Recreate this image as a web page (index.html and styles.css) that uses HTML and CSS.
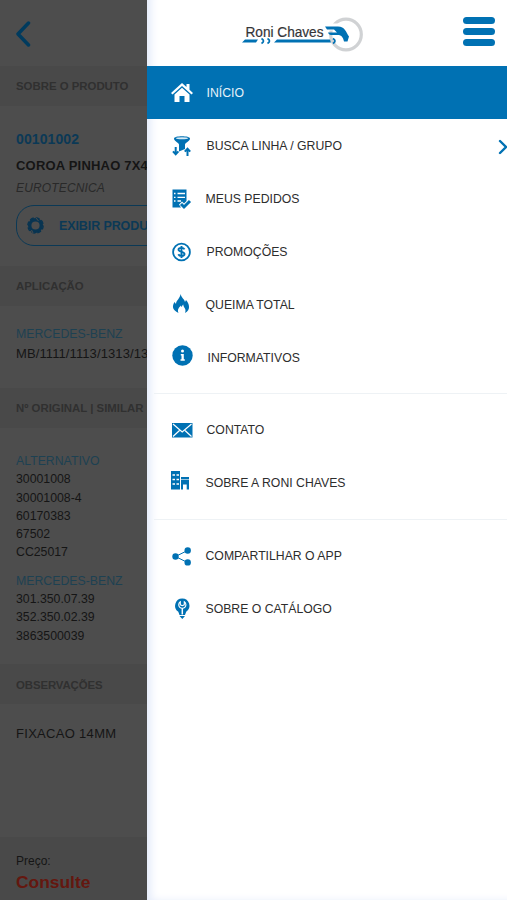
FILE: index.html
```
<!DOCTYPE html>
<html lang="pt-BR">
<head>
  <meta charset="UTF-8">
  <title>Roni Chaves</title>
  <link rel="stylesheet" href="styles.css">
</head>
<body>
  <!-- Produto (atrás do menu) -->
  <main class="produto">
    <div class="topo">
      <svg width="16" height="26" viewBox="0 0 16 26"><path d="M13.500 2 3 13l10.500 11" fill="none" stroke="#003b5e" stroke-width="3.500" stroke-linecap="round" stroke-linejoin="round"/></svg>
    </div>

    <h2 class="secao">SOBRE O PRODUTO</h2>
    <div class="bloco sobre">
      <div class="codigo">00101002</div>
      <div class="nome">COROA PINHAO 7X4</div>
      <div class="marca">EUROTECNICA</div>
      <div class="botao">
        <svg width="17" height="17" viewBox="0 0 17 17"><circle cx="8.5" cy="8.5" r="5.8" fill="none" stroke="#083451" stroke-width="3.400"/><circle cx="8.5" cy="8.5" r="7.700" fill="none" stroke="#083451" stroke-width="1.300" stroke-dasharray="4 2.050"/><path d="m9 1 2.500 3M6 16l-1.500-3" stroke="#4c4c4c" stroke-width="1"/></svg>
        <span>EXIBIR PRODU</span>
      </div>
    </div>

    <h2 class="secao">APLICAÇÃO</h2>
    <div class="bloco aplicacao">
      <div class="grupo">MERCEDES-BENZ</div>
      <div class="veiculo">MB/1111/1113/1313/13</div>
    </div>

    <h2 class="secao">Nº ORIGINAL | SIMILAR</h2>
    <div class="bloco numeros">
      <div class="grupo">ALTERNATIVO</div>
      <div>30001008</div>
      <div>30001008-4</div>
      <div>60170383</div>
      <div>67502</div>
      <div>CC25017</div>
      <div class="grupo outro">MERCEDES-BENZ</div>
      <div>301.350.07.39</div>
      <div>352.350.02.39</div>
      <div>3863500039</div>
    </div>

    <h2 class="secao obs">OBSERVAÇÕES</h2>
    <div class="bloco fixacao">FIXACAO 14MM</div>

    <div class="preco">
      <div>Preço:</div>
      <div class="valor">Consulte</div>
    </div>
  </main>

  <!-- Menu lateral -->
  <nav class="menu">
    <header class="menu-topo">
      <svg class="logo" width="122" height="38" viewBox="0 0 122 38">
        <circle cx="104" cy="18.500" r="15.300" fill="none" stroke="#d0d2d4" stroke-width="3.200"/>
        <path d="M83 11h14c6 0 8 6 9 14" fill="none" stroke="#fff" stroke-width="7"/>
        <text x="3.500" y="20.500" textLength="78" lengthAdjust="spacingAndGlyphs">Roni Chaves</text>
        <path d="M83 10.500h13c7 0 8 6 11 10l-1.500 5H102c-1-4.500-3-6.500-6-6.500h-7c-1.500 0-2.500-1-3-2.500h9l-3-3h-7z" fill="#0071b3"/>
        <path d="M3 23.500h13L14 26.500H0zM35 23.500h53l1 3H32z" fill="#0071b3"/>
        <path d="M19.500 22.500q4 2.500 0 5M25.500 22.500q4 2.500 0 5M91 22.500q4 2.500 0 5" fill="none" stroke="#0071b3" stroke-width="1.700"/>
      </svg>
      <div class="hamburguer"><i></i><i></i><i></i></div>
    </header>

    <ul>
      <li class="ativo">
        <svg viewBox="0 0 24 24"><path d="M12 2 1 12l1.500 1.600L12 5l9.500 8.600L23 12l-3.500-3.200V3h-3v3.100zM12 6.800l-7.500 6.800V21h5v-6h5v6h5v-7.400z" fill="#fff"/></svg>
        <span class="t2">INÍCIO</span>
      </li>
      <li>
        <svg viewBox="0 0 24 24"><path d="M4 4.500C4 1.500 20 1.500 20 4.500c0 2.500-4.500 4-5 6V15l-6 2.500v-7C8.500 8.500 4 7 4 4.500z" fill="#0071b3"/><ellipse cx="12" cy="4.300" rx="6" ry="1" fill="#d7ebf6"/><path d="M5.700 13v7M3 17.300l2.700 3 2.700-3M17.500 22v-7M14.800 17.700l2.700-3 2.700 3" fill="none" stroke="#0071b3" stroke-width="2"/></svg>
        <span class="t2">BUSCA LINHA / GRUPO</span>
        <svg class="seta" viewBox="0 0 10 16"><path d="m2 2 6 6-6 6" fill="none" stroke="#0071b3" stroke-width="2.400" stroke-linecap="round"/></svg>
      </li>
      <li>
        <svg viewBox="0 0 24 24"><path d="M2.500 2.500h14v11.500l-2.500 2.500-2-2-3 3 2 3H2.500z" fill="#0071b3"/><path d="M7.500 6.500H15M7.500 10.300H15M7.500 14H11M4 6.500h1.500M4 10.300h1.500M4 14h1.500" stroke="#fff" stroke-width="1.300"/><path d="m11 17 3 3 6-6" fill="none" stroke="#0071b3" stroke-width="3"/></svg>
        <span>MEUS PEDIDOS</span>
      </li>
      <li>
        <svg viewBox="0 0 24 24"><g transform="translate(-.5 0)" fill="none" stroke="#0071b3"><circle cx="12" cy="12" r="8.400" stroke-width="1.800"/><path d="M15 9.400c-1-2.200-6-1.900-6 .3s6 1.800 6 4.400c0 2.500-5 2.500-6.200.2M12 6v12" stroke-width="1.900"/></g></svg>
        <span class="t2">PROMOÇÕES</span>
      </li>
      <li class="fogo">
        <svg viewBox="0 0 24 24"><path d="M10.500 2c1 4 4 5 4.500 8l1-2c3.500 4 5 10-1 13 1-2.500.5-4-1-6-.5-.8-.7-1.700-.7-2.500-1 .7-1.300 1.500-1.300 2.500-.7-.5-1-.7-1-1.500C9 15.500 7 17.500 8.500 21 2 18 2 14 4.500 10L6 12c0-4 4-5 4.500-10z" fill="#0071b3"/></svg>
        <span>QUEIMA TOTAL</span>
      </li>
      <li class="info">
        <svg viewBox="0 0 24 24"><circle cx="12.500" cy="10.500" r="10.200" fill="#0071b3"/><circle cx="12.500" cy="6" r="1.500" fill="#fff"/><path d="M10.800 9h3v5.200h1v1.600h-4.300v-1.600h1v-3.600h-.7z" fill="#fff"/></svg>
        <span class="t3">INFORMATIVOS</span>
      </li>
    </ul>

    <ul>
      <li>
        <svg viewBox="0 0 24 24"><path d="M2 5h20.500v14.500H2z" fill="#0071b3"/><path d="m3 6 9.200 8L21.500 6M3 18.500l6.500-6M21.500 18.500l-6.500-6" fill="none" stroke="#fff" stroke-width="1.200"/></svg>
        <span class="t2">CONTATO</span>
      </li>
      <li>
        <svg viewBox="0 0 24 24"><path d="M1 0h9v18.500H1zM11 6h8v12.500h-2.300v-5H13v5h-2z" fill="#0071b3"/><path d="M2.500 4H5M6.500 4H9M2.500 8.500H5M6.500 8.500H9M2.500 13H5M6.500 13H9" stroke="#fff" stroke-width="1.600"/><path d="M11 8.500h8" stroke="#fff" stroke-width=".6"/></svg>
        <span>SOBRE A RONI CHAVES</span>
      </li>
    </ul>

    <ul>
      <li>
        <svg viewBox="0 0 24 24"><path d="M17.500 6.500 5.500 12.500l12 6" fill="none" stroke="#0071b3" stroke-width="1"/><g fill="#0071b3"><circle cx="5.500" cy="12.500" r="3.200"/><circle cx="17.700" cy="6.500" r="3.200"/><circle cx="17.700" cy="18.400" r="3.200"/></g></svg>
        <span>COMPARTILHAR O APP</span>
      </li>
      <li>
        <svg viewBox="0 0 24 24"><path d="M12.200 1.500a7.200 7.200 0 0 1 4 13.200L15 18H9.500l-1.200-3.300a7.200 7.200 0 0 1 3.900-13.200zM9.500 19H15l-2.700 3z" fill="#0071b3"/><path d="M12.300 11v6.500" stroke="#fff" stroke-width="1.500"/><path d="M10.300 4.700a3.600 3.600 0 1 0 4 0v3.100l-2 .9-2-.9z" fill="none" stroke="#fff" stroke-width="1.100"/></svg>
        <span>SOBRE O CATÁLOGO</span>
      </li>
    </ul>
  </nav>
</body>
</html>
```

FILE: styles.css
```
* {
  box-sizing: border-box;
}

body {
  margin: 0;
  height: 900px;
  display: flex;
  overflow: hidden;
  font-family: "Liberation Sans", Arial, sans-serif;
  font-size: 13px;
}

svg {
  display: block;
  flex: none;
}

/* Produto */
.produto {
  width: 146.500px;
  height: 900px;
  flex: none;
  display: flex;
  flex-direction: column;
  overflow: hidden;
  white-space: nowrap;
  background: #4d4d4d;
  color: #151515;
}

.topo {
  height: 66px;
  padding: 21px 0 0 15px;
}

.secao {
  height: 40px;
  margin: 0;
  padding-left: 16px;
  line-height: 41px;
  font-size: 11.4px;
  color: #303030;
  background: #494949;
}

.obs {
  line-height: 42px;
  letter-spacing: -0.1px;
}

.bloco {
  padding-left: 16px;
}

.sobre {
  height: 160px;
  padding-top: 25px;
}

.codigo {
  line-height: 16px;
  font-size: 14px;
  font-weight: bold;
  letter-spacing: 0.1px;
  color: #0b3956;
}

.nome {
  margin-top: 10px;
  line-height: 17px;
  font-weight: bold;
  letter-spacing: 0.2px;
}

.marca {
  margin-top: 6px;
  line-height: 16px;
  font-size: 12px;
  font-style: italic;
  letter-spacing: 0.15px;
  color: #292929;
}

.botao {
  width: 220px;
  height: 41px;
  margin-top: 9px;
  padding-left: 10px;
  display: flex;
  align-items: center;
  gap: 15px;
  border: 1px solid #0b3956;
  border-radius: 18px;
  font-size: 12.5px;
  font-weight: bold;
  letter-spacing: -0.1px;
  color: #0b3956;
}

.aplicacao {
  height: 82px;
  padding-top: 18px;
  line-height: 20px;
}

.veiculo {
  letter-spacing: 0.1px;
}

.grupo {
  font-size: 12.3px;
  color: #1d4152;
}

.numeros {
  height: 236px;
  padding-top: 24px;
  line-height: 18.3px;
  font-size: 12.3px;
}

.outro {
  margin-top: 10px;
}

.fixacao {
  padding-top: 22px;
  line-height: 16px;
  letter-spacing: 0.3px;
}

.preco {
  height: 63px;
  margin-top: auto;
  padding: 15px 0 0 16px;
  line-height: 19px;
  font-size: 12px;
  background: #494949;
}

.valor {
  line-height: 23px;
  font-size: 17.4px;
  font-weight: bold;
  color: #64170f;
}

/* Menu lateral */
.menu {
  flex: 1;
  min-width: 0;
  height: 900px;
  overflow: hidden;
  background: #fff;
  box-shadow: inset 9px -4px 9px -5px #e4ebfa;
}

.menu-topo {
  height: 66px;
  padding: 16px 12px 0 95.500px;
  display: flex;
  justify-content: space-between;
}

.logo text {
  font-family: "Liberation Sans", Arial, sans-serif;
  font-size: 15px;
  fill: #343438;
  stroke: #343438;
  stroke-width: 0.2px;
}

.hamburguer {
  width: 32px;
  padding-top: 1px;
  display: flex;
  flex-direction: column;
  gap: 4.500px;
}

.hamburguer i {
  height: 6.500px;
  border-radius: 4px;
  background: #0071b3;
}

.menu ul {
  margin: 0;
  padding: 0;
  list-style: none;
}

.menu ul + ul {
  margin: 9px 0 0 7px;
  padding-top: 9.500px;
  border-top: 1px solid #eef2f5;
}

.menu li {
  height: 53px;
  padding-left: 23.500px;
  display: flex;
  align-items: center;
  font-size: 12.25px;
  color: #2d2d2d;
}

.menu ul + ul li {
  padding-left: 16.500px;
}

.menu li svg {
  width: 24px;
  height: 24px;
}

.menu li span {
  margin-left: 11.500px;
}

.menu li .t2 {
  margin-left: 12.500px;
}

.menu li .t3 {
  margin-left: 13.500px;
}

.menu .info svg,
.menu .fogo svg {
  margin-top: -2px;
}

.menu .ativo {
  background: #0071b3;
  color: #e6f2f9;
}

.menu li .seta {
  width: 10px;
  height: 16px;
  margin: 3px -1px 0 auto;
}
```
